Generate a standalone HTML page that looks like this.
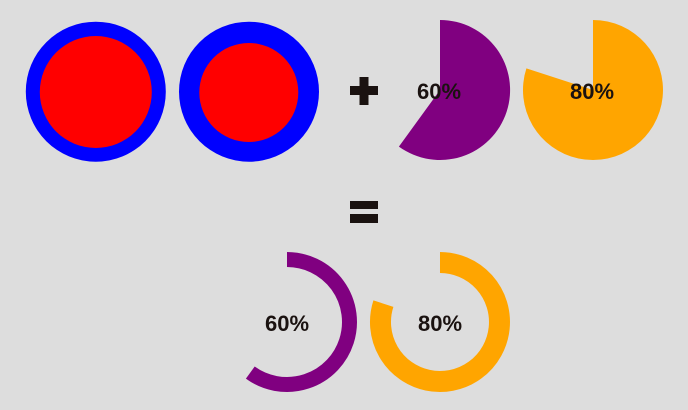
<!DOCTYPE html>
<html><head><style>html,body{margin:0;padding:0;background:#dddddd;width:688px;height:410px;overflow:hidden}</style></head>
<body>
<svg width="688" height="410" xmlns="http://www.w3.org/2000/svg" style="display:block">
<rect width="688" height="410" fill="#dddddd"/>
<circle cx="95.8" cy="91.7" r="70" fill="#0000ff"/>
<circle cx="95.8" cy="92" r="56" fill="#ff0000"/>
<circle cx="249" cy="91.7" r="70" fill="#0000ff"/>
<circle cx="248.8" cy="92.5" r="49.5" fill="#ff0000"/>
<rect x="350" y="86" width="28" height="9" fill="#1a1210"/>
<rect x="359.5" y="77" width="9" height="28" fill="#1a1210"/>
<path d="M440 90 L440 20 A70 70 0 1 1 398.9 146.6 Z" fill="#800080"/>
<path d="M593 90 L593 20 A70 70 0 1 1 526.4 68.4 Z" fill="#ffa500"/>
<g font-family="Liberation Sans, sans-serif" font-weight="bold" font-size="22" fill="#1a1210" text-anchor="middle">
<text x="439" y="99">60%</text>
<text x="592" y="99">80%</text>
<text x="287" y="331">60%</text>
<text x="440" y="331">80%</text>
</g>
<rect x="350" y="201" width="28" height="8" fill="#1a1210"/>
<rect x="350" y="214" width="28" height="9" fill="#1a1210"/>
<path d="M287 259.5 A62.5 62.5 0 1 1 250.3 372.6" fill="none" stroke="#800080" stroke-width="15"/>
<path d="M440 262.5 A59.5 59.5 0 1 1 383.4 303.6" fill="none" stroke="#ffa500" stroke-width="21"/>
</svg>
</body></html>
